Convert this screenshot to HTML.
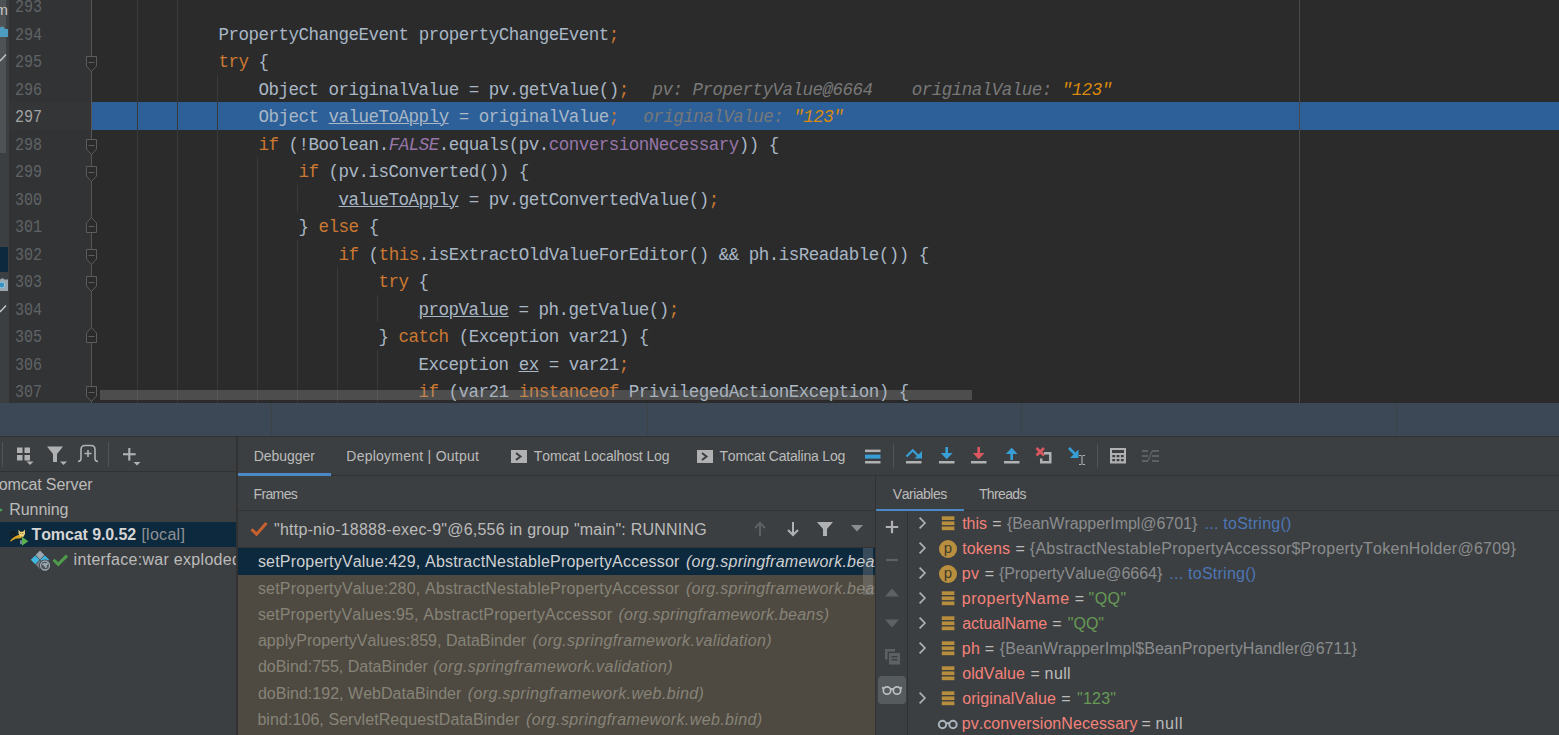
<!DOCTYPE html>
<html>
<head>
<meta charset="utf-8">
<title>IDE</title>
<style>
*{box-sizing:border-box;margin:0;padding:0}
html,body{width:1559px;height:735px;overflow:hidden;background:#3c3f41}
body{position:relative;font-family:"Liberation Sans",sans-serif;color:#bbbbbb}
.abs{position:absolute}
/* ---------- editor ---------- */
#editor{position:absolute;left:0;top:0;width:1559px;height:403px;background:#2b2b2b;overflow:hidden}
#strip{position:absolute;left:0;top:0;width:9px;height:403px;background:#3c3f41}
#gutter{position:absolute;left:9px;top:0;width:82px;height:403px;background:#313335}
#foldline{position:absolute;left:91px;top:0;width:1px;height:403px;background:#555555}
.guide{position:absolute;width:1px;background:#3a3a3a}
#margin{position:absolute;left:1299px;top:0;width:1px;height:403px;background:#4a4a4a}
.row{position:absolute;left:0;width:1559px;height:27.5px}
.num{position:absolute;left:14.8px;top:0;height:27.5px;line-height:27.5px;font-family:"Liberation Mono",monospace;font-size:18px;color:#606366;transform:scaleX(0.835);transform-origin:0 0}
.num span{position:relative;top:2.5px}
.code span.t{position:relative;top:3.4px}
.code{position:absolute;left:98px;top:0;height:27.5px;line-height:27.5px;white-space:pre;font-family:"Liberation Mono",monospace;font-size:17.5px;letter-spacing:-0.5px;color:#a9b7c6}
.k{color:#cc7832}
.p{color:#9876aa}
.pi{color:#9876aa;font-style:italic}
.u{text-decoration:underline;text-decoration-thickness:1px;text-underline-offset:1.2px}
.h{color:#787878;font-style:italic}
.hv{color:#d98a0e;font-style:italic}
.fold{position:absolute;left:85px;width:13px;height:17px}
#hscroll{position:absolute;left:100px;top:390px;width:872px;height:10px;background:rgba(166,166,166,0.28)}
/* ---------- blue bar ---------- */
#bluebar{position:absolute;left:0;top:403px;width:1559px;height:33px;background:#3c4856}
#bluebar i{position:absolute;top:0;width:1px;height:33px;background:#3d4246}
/* ---------- tool window ---------- */
#tw{position:absolute;left:0;top:436px;width:1559px;height:299px;background:#3c3f41;overflow:hidden}
.txt{position:absolute;white-space:pre;line-height:20px;height:20px;font-kerning:none}
.s14{font-size:14px}
.txt b{font-weight:bold}
.txt i{font-style:italic}
.s16{font-size:16px}
</style>
</head>
<body>
<div id="editor">
<div id="strip"><div class="abs" style="left:0;top:0;width:6px;height:153px;background:#4e5254"></div>
<div class="abs" style="left:-4.5px;top:1px;font-size:15px;line-height:18px;color:#c4c4c4">m</div>
<svg class="abs" style="left:0;top:24px" width="9" height="14" viewBox="0 0 9 14"><path d="M0 3.500c1.500-1.500 3-1.500 4 0l1 1.500h3v8h-8z" fill="#4c9dc0"/></svg>
<svg class="abs" style="left:0;top:52px" width="7" height="10" viewBox="0 0 7 10"><path d="M-1 7l1.500 1.500L6 2.500" fill="none" stroke="#c4c4c4" stroke-width="1.500"/></svg>
<div class="abs" style="left:0;top:247px;width:7.500px;height:25px;background:#0d293e"></div>
<svg class="abs" style="left:0;top:276px" width="9" height="16" viewBox="0 0 9 16"><path d="M0 3.500l2.500-1.500l2 1.500h3.500v11.500h-8z" fill="#9aa7b0"/><circle cx="1.800" cy="9" r="2.900" fill="#3592c4" stroke="#b9e0f5" stroke-width=".6"/></svg>
<svg class="abs" style="left:0;top:303px" width="7" height="10" viewBox="0 0 7 10"><path d="M-1 7l1.500 1.500L6 2.500" fill="none" stroke="#c4c4c4" stroke-width="1.500"/></svg>
</div>
<div id="gutter"></div>
<div class="row" style="top:-9px;"><div class="num" style="color:#606366"><span>293</span></div></div>
<div class="row" style="top:19px;"><div class="num" style="color:#606366"><span>294</span></div><div class="code" style="left:218.6px"><span class="t">PropertyChangeEvent propertyChangeEvent<span class="k">;</span></span></div></div>
<div class="row" style="top:46px;"><div class="num" style="color:#606366"><span>295</span></div><div class="code" style="left:218.6px"><span class="t"><span class="k">try</span> {</span></div></div>
<div class="row" style="top:74px;"><div class="num" style="color:#606366"><span>296</span></div><div class="code" style="left:258.6px"><span class="t">Object originalValue = pv.getValue()<span class="k">;</span></span><span class="t h" style="margin-left:23.8px">pv: PropertyValue@6664</span><span class="t h" style="margin-left:39.2px">originalValue: </span><span class="t hv">"123"</span></div></div>
<div class="row" style="top:101px;"><div class="abs" style="left:92px;top:1px;width:1467px;height:28px;background:#2d6099"></div><div class="abs" style="left:9px;top:1px;width:82px;height:28px;background:#333537"></div><div class="num" style="color:#a4a3a3"><span>297</span></div><div class="code" style="left:258.6px"><span class="t">Object <span class="u">valueToApply</span> = originalValue<span class="k">;</span></span><span class="t h" style="margin-left:24.6px">originalValue: </span><span class="t hv">"123"</span></div></div>
<div class="row" style="top:129px;"><div class="num" style="color:#606366"><span>298</span></div><div class="code" style="left:258.6px"><span class="t"><span class="k">if</span> (!Boolean.<span class="pi">FALSE</span>.equals(pv.<span class="p">conversionNecessary</span>)) {</span></div></div>
<div class="row" style="top:156px;"><div class="num" style="color:#606366"><span>299</span></div><div class="code" style="left:298.6px"><span class="t"><span class="k">if</span> (pv.isConverted()) {</span></div></div>
<div class="row" style="top:184px;"><div class="num" style="color:#606366"><span>300</span></div><div class="code" style="left:338.6px"><span class="t"><span class="u">valueToApply</span> = pv.getConvertedValue()<span class="k">;</span></span></div></div>
<div class="row" style="top:211px;"><div class="num" style="color:#606366"><span>301</span></div><div class="code" style="left:298.6px"><span class="t">} <span class="k">else</span> {</span></div></div>
<div class="row" style="top:239px;"><div class="num" style="color:#606366"><span>302</span></div><div class="code" style="left:338.6px"><span class="t"><span class="k">if</span> (<span class="k">this</span>.isExtractOldValueForEditor() &amp;&amp; ph.isReadable()) {</span></div></div>
<div class="row" style="top:266px;"><div class="num" style="color:#606366"><span>303</span></div><div class="code" style="left:378.6px"><span class="t"><span class="k">try</span> {</span></div></div>
<div class="row" style="top:294px;"><div class="num" style="color:#606366"><span>304</span></div><div class="code" style="left:418.6px"><span class="t"><span class="u">propValue</span> = ph.getValue()<span class="k">;</span></span></div></div>
<div class="row" style="top:321px;"><div class="num" style="color:#606366"><span>305</span></div><div class="code" style="left:378.6px"><span class="t">} <span class="k">catch</span> (Exception var21) {</span></div></div>
<div class="row" style="top:349px;"><div class="num" style="color:#606366"><span>306</span></div><div class="code" style="left:418.6px"><span class="t">Exception <span class="u">ex</span> = var21<span class="k">;</span></span></div></div>
<div class="row" style="top:376px;"><div class="num" style="color:#606366"><span>307</span></div><div class="code" style="left:418.6px"><span class="t"><span class="k">if</span> (var21 <span class="k">instanceof</span> PrivilegedActionException) {</span></div></div>
<div class="guide" style="left:137px;top:0px;height:403px"></div>
<div class="guide" style="left:177px;top:0px;height:403px"></div>
<div class="guide" style="left:217px;top:74.5px;height:328.5px"></div>
<div class="guide" style="left:257px;top:157.0px;height:246.0px"></div>
<div class="guide" style="left:297px;top:184.5px;height:27.5px"></div>
<div class="guide" style="left:297px;top:239.5px;height:163.5px"></div>
<div class="guide" style="left:337px;top:267.0px;height:136.0px"></div>
<div class="guide" style="left:377px;top:294.5px;height:27.5px"></div>
<div class="guide" style="left:377px;top:349.5px;height:53.5px"></div>

<div id="margin"></div>
<div id="foldline"></div>
<svg class="fold" style="top:56.0px" viewBox="0 0 13 17"><path d="M1.5 0.5H11.5V10L6.5 15.5L1.5 10Z" fill="#2b2b2b" stroke="#5c5c5c" stroke-width="1"/><path d="M3.5 6.5H9.5" stroke="#5c5c5c" stroke-width="1"/></svg>
<svg class="fold" style="top:138.5px" viewBox="0 0 13 17"><path d="M1.5 0.5H11.5V10L6.5 15.5L1.5 10Z" fill="#2b2b2b" stroke="#5c5c5c" stroke-width="1"/><path d="M3.5 6.5H9.5" stroke="#5c5c5c" stroke-width="1"/></svg>
<svg class="fold" style="top:166.0px" viewBox="0 0 13 17"><path d="M1.5 0.5H11.5V10L6.5 15.5L1.5 10Z" fill="#2b2b2b" stroke="#5c5c5c" stroke-width="1"/><path d="M3.5 6.5H9.5" stroke="#5c5c5c" stroke-width="1"/></svg>
<svg class="fold" style="top:217.0px" viewBox="0 0 13 17"><path d="M1.5 15.5H11.5V6L6.5 0.5L1.5 6Z" fill="#2b2b2b" stroke="#5c5c5c" stroke-width="1"/><path d="M3.5 9.5H9.5" stroke="#5c5c5c" stroke-width="1"/></svg>
<svg class="fold" style="top:248.5px" viewBox="0 0 13 17"><path d="M1.5 0.5H11.5V10L6.5 15.5L1.5 10Z" fill="#2b2b2b" stroke="#5c5c5c" stroke-width="1"/><path d="M3.5 6.5H9.5" stroke="#5c5c5c" stroke-width="1"/></svg>
<svg class="fold" style="top:276.0px" viewBox="0 0 13 17"><path d="M1.5 0.5H11.5V10L6.5 15.5L1.5 10Z" fill="#2b2b2b" stroke="#5c5c5c" stroke-width="1"/><path d="M3.5 6.5H9.5" stroke="#5c5c5c" stroke-width="1"/></svg>
<svg class="fold" style="top:327.0px" viewBox="0 0 13 17"><path d="M1.5 15.5H11.5V6L6.5 0.5L1.5 6Z" fill="#2b2b2b" stroke="#5c5c5c" stroke-width="1"/><path d="M3.5 9.5H9.5" stroke="#5c5c5c" stroke-width="1"/></svg>
<svg class="fold" style="top:386.0px" viewBox="0 0 13 17"><path d="M1.5 0.5H11.5V10L6.5 15.5L1.5 10Z" fill="#2b2b2b" stroke="#5c5c5c" stroke-width="1"/><path d="M3.5 6.5H9.5" stroke="#5c5c5c" stroke-width="1"/></svg>
<div id="hscroll"></div>
</div>
<div id="bluebar"><i style="left:271px"></i><i style="left:647px"></i><i style="left:1021px"></i><i style="left:1396px"></i></div>
<div id="tw">
<div class="abs" style="left:0px;top:0px;width:1559px;height:1px;background:#323232;"></div>
<div class="abs" style="left:0px;top:35px;width:236px;height:1px;background:#323232;"></div>
<div class="abs" style="left:2px;top:6px;width:1px;height:25px;background:#515456;"></div>
<div class="abs" style="left:108px;top:6px;width:1px;height:25px;background:#515456;"></div>
<svg class="abs" style="left:16px;top:10px" width="18" height="20" viewBox="0 0 18 20"><g fill="#afb1b3"><rect x="1" y="1.5" width="5.5" height="5.5"/><rect x="8.5" y="1.5" width="5.5" height="5.5"/><rect x="1" y="9" width="5.5" height="5.5"/><rect x="8.5" y="9" width="5.5" height="5.5"/><path d="M10.5 15.5h7l-3.5 3.5z"/></g></svg>
<svg class="abs" style="left:46px;top:9px" width="22" height="21" viewBox="0 0 22 21"><g fill="#afb1b3"><path d="M1 1.5h16l-6 7.5v8h-4v-8z"/><path d="M14 16.5h7l-3.5 3.5z"/></g></svg>
<svg class="abs" style="left:77px;top:8px" width="22" height="20" viewBox="0 0 22 20"><g fill="none" stroke="#afb1b3" stroke-width="1.6"><path d="M1 17.5c2.5 0 3-1.5 3-3.500v-8.500c0-2.500 1.500-4 4-4h6c2.500 0 4 1.500 4 4v8.500c0 2 .5 3.500 3 3.500"/><path d="M7.500 9.500h7M11 6v7"/></g></svg>
<svg class="abs" style="left:121px;top:10px" width="22" height="21" viewBox="0 0 22 21"><g fill="#afb1b3"><rect x="2" y="7.200" width="12.600" height="2.100"/><rect x="7.250" y="2" width="2.100" height="12.600"/><path d="M12.500 16h7l-3.500 3.500z"/></g></svg>
<div class="abs" style="left:0px;top:86px;width:236px;height:25px;background:#0d293e;"></div>
<div class="txt s16" style="left:-10.8px;top:38.5px;letter-spacing:-0.15px;">Tomcat</div>
<div class="txt s16" style="left:45.8px;top:38.5px;letter-spacing:-0.05px;">Server</div>
<svg class="abs" style="left:0px;top:69px" width="4" height="10" viewBox="0 0 4 10"><path d="M-6 0l9 5l-9 5z" fill="#499c54"/></svg>
<div class="txt s16" style="left:9.2px;top:63.5px;letter-spacing:-0.05px;">Running</div>
<div class="txt s16" style="left:31.5px;top:88.5px;color:#d5d5d5;letter-spacing:-0.102px;"><b>Tomcat 9.0.52</b></div>
<div class="txt s16" style="left:141.4px;top:88.5px;color:#8f9294;letter-spacing:0.275px;">[local]</div>
<div class="txt s16" style="left:73.6px;top:113.5px;letter-spacing:0.3px;width:162.4px;overflow:hidden;">interface:war exploded</div>
<svg class="abs" style="left:9px;top:90px" width="22" height="21" viewBox="0 0 22 21"><circle cx="4.200" cy="8.300" r="2.400" fill="none" stroke="#15181b" stroke-width="1.100"/><path d="M12.500 8.500C8.500 8.800 4 10.800 1 15l1 .6c3-2.600 6-3.400 10.500-3.200z" fill="#d9a41f"/><path d="M7 12.500l1.500 2 1-.5" fill="none" stroke="#15181b" stroke-width=".9"/><path d="M9.400 3.600l1.700 2.200h2.900l1.800-2.200.3 4.200-1.600 2.900h-3l-1.800-2.700z" fill="#f1d47c"/><circle cx="11.700" cy="7.600" r=".55" fill="#6b5a2a"/><circle cx="13.900" cy="7.600" r=".55" fill="#6b5a2a"/><rect x="11" y="14.200" width="2.200" height="4" fill="#6f8194"/><path d="M13 10.800l6.300 4.400-6.300 4.600z" fill="#5bb04e"/></svg>
<svg class="abs" style="left:30px;top:114px" width="22" height="22" viewBox="0 0 22 22"><path d="M10 .6l4.400 4.400-4.400 4.400-4.400-4.400z" fill="#9aa7b0"/><path d="M5.200 5.400l4.400 4.400-4.400 4.400-4.400-4.400z" fill="#40b6e0"/><path d="M14.800 5.400l4.400 4.400-4.400 4.400-4.400-4.400z" fill="#40b6e0"/><path d="M10 10.200l4.400 4.400-4.400 4.400-4.400-4.400z" fill="#9aa7b0" opacity=".6"/><circle cx="15" cy="15.500" r="5.900" fill="#3c3f41"/><circle cx="15" cy="15.500" r="4.500" fill="#4d5459" stroke="#9aa7b0" stroke-width="1.300"/><path d="M12 15c.6-1.800 2.400-2.400 3.600-1.600l1.800-1.400.8 2.400-1.600 1 .4 2.200-1.800.4-1-2.200z" fill="#9aa7b0"/></svg>
<svg class="abs" style="left:52px;top:115px" width="18" height="18" viewBox="0 0 18 18"><path d="M1.600 8.800l4.600 4.600L15 4.600" fill="none" stroke="#4f9c4a" stroke-width="3"/></svg>
<div class="abs" style="left:236px;top:1px;width:2px;height:299px;background:#323232;"></div>
<div class="abs" style="left:238px;top:39px;width:1321px;height:1px;background:#323232;"></div>
<div class="abs" style="left:238px;top:37px;width:93px;height:3px;background:#4a88c7;"></div>
<div class="txt s14" style="left:253.7px;top:10px;letter-spacing:-0.047px;">Debugger</div>
<div class="txt s14" style="left:346.3px;top:10px;letter-spacing:0.247px;">Deployment | Output</div>
<svg class="abs" style="left:511px;top:14px" width="16" height="13" viewBox="0 0 16 13"><rect x="0" y="0" width="16" height="13" fill="#afb1b3"/><path d="M5 3l4.500 3.500L5 10" fill="none" stroke="#3c3f41" stroke-width="2"/></svg>
<div class="txt s14" style="left:533.8px;top:10px;letter-spacing:-0.103px;">Tomcat Localhost Log</div>
<svg class="abs" style="left:697px;top:14px" width="16" height="13" viewBox="0 0 16 13"><rect x="0" y="0" width="16" height="13" fill="#afb1b3"/><path d="M5 3l4.500 3.500L5 10" fill="none" stroke="#3c3f41" stroke-width="2"/></svg>
<div class="txt s14" style="left:719.5px;top:10px;letter-spacing:-0.188px;">Tomcat Catalina Log</div>
<svg class="abs" style="left:865px;top:13px" width="16" height="15" viewBox="0 0 16 15"><rect x="0" y=".6" width="15.5" height="2.500" fill="#afb1b3"/><rect x="0" y="5.600" width="15.500" height="4" fill="#389fd6"/><rect x="0" y="12" width="15.500" height="2.500" fill="#afb1b3"/></svg>
<div class="abs" style="left:893px;top:8px;width:1px;height:24px;background:#515456;"></div>
<svg class="abs" style="left:905px;top:10px" width="18" height="18" viewBox="0 0 18 18"><path d="M1.500 10.500l6.200-6.200 5.500 5.500" fill="none" stroke="#389fd6" stroke-width="2.200"/><path d="M17 5v7.500h-7.500z" fill="#389fd6"/><rect x="1" y="15" width="15.500" height="2.500" fill="#afb1b3"/></svg>
<svg class="abs" style="left:938px;top:10px" width="18" height="18" viewBox="0 0 18 18"><rect x="7.400" y="1" width="2.600" height="8" fill="#389fd6"/><path d="M2.800 7h11.800l-5.900 6.200z" fill="#389fd6"/><rect x="1" y="15" width="15.500" height="2.500" fill="#afb1b3"/></svg>
<svg class="abs" style="left:970px;top:10px" width="18" height="18" viewBox="0 0 18 18"><rect x="7.400" y="1" width="2.600" height="8" fill="#db5860"/><path d="M2.800 7h11.800l-5.900 6.200z" fill="#db5860"/><rect x="1" y="15" width="15.500" height="2.500" fill="#afb1b3"/></svg>
<svg class="abs" style="left:1003px;top:10px" width="18" height="18" viewBox="0 0 18 18"><rect x="7.400" y="6" width="2.600" height="8" fill="#389fd6"/><path d="M2.800 8h11.800l-5.900-6.200z" fill="#389fd6"/><rect x="1" y="15" width="15.500" height="2.500" fill="#afb1b3"/></svg>
<svg class="abs" style="left:1035px;top:10px" width="18" height="19" viewBox="0 0 18 19"><path d="M1.500 2l7.500 7.500M9 2l-7.500 7.500" stroke="#db5860" stroke-width="2.600" fill="none"/><path d="M9 6h7.500v11.500h-11.500v-5h2.500v2.500h6.500v-6.500h-5z" fill="#afb1b3"/></svg>
<svg class="abs" style="left:1067px;top:10px" width="20" height="20" viewBox="0 0 20 20"><path d="M2 2l8 8" stroke="#389fd6" stroke-width="2.600"/><path d="M11.500 3.500v8.500h-8.500z" fill="#389fd6"/><path d="M12 9.500h2.500M15.500 9.500h2.500M12 18.500h2.500M15.500 18.500h2.500M15 10v8" stroke="#afb1b3" stroke-width="1.100" fill="none"/></svg>
<div class="abs" style="left:1097px;top:8px;width:1px;height:24px;background:#515456;"></div>
<svg class="abs" style="left:1110px;top:12px" width="16" height="16" viewBox="0 0 16 16"><path d="M0 0h16v15.500h-16z M2 2v3h12v-3z M2.300 7v2.300h2.800v-2.300z M6.600 7v2.300h2.800v-2.300z M10.900 7v2.300h2.800v-2.300z M2.300 11v2.300h2.800v-2.300z M6.600 11v2.300h2.800v-2.300z M10.900 11v2.300h2.800v-2.300z" fill="#afb1b3" fill-rule="evenodd"/></svg>
<svg class="abs" style="left:1142px;top:13px" width="18" height="14" viewBox="0 0 18 14"><g stroke="#5e6163" stroke-width="1.800" fill="none"><path d="M0 2h6M0 7h6M0 12h6M10 2h7M10 7h7M10 12h7"/><path d="M5 12c3 0 3-10 6-10" stroke-width="1.300"/></g></svg>
<div class="txt s14" style="left:253.5px;top:48px;letter-spacing:-0.63px;">Frames</div>
<div class="abs" style="left:238px;top:74px;width:637px;height:1px;background:#323232;"></div>
<div class="abs" style="left:238px;top:111px;width:637px;height:1px;background:#323232;"></div>
<svg class="abs" style="left:250px;top:85px" width="18" height="15" viewBox="0 0 18 15"><path d="M1.500 8.200l5 5L16.500 2" fill="none" stroke="#c8612f" stroke-width="3"/></svg>
<div class="txt s16" style="left:274.0px;top:83.5px;letter-spacing:0.231px;">"http-nio-18888-exec-9"@6,556 in group "main": RUNNING</div>
<svg class="abs" style="left:753px;top:85px" width="14" height="16" viewBox="0 0 14 16"><path d="M7 15V2M2 7l5-5 5 5" fill="none" stroke="#5e6163" stroke-width="2"/></svg>
<svg class="abs" style="left:786px;top:85px" width="14" height="16" viewBox="0 0 14 16"><path d="M7 1v13M2 9l5 5 5-5" fill="none" stroke="#afb1b3" stroke-width="2"/></svg>
<svg class="abs" style="left:816px;top:85px" width="18" height="16" viewBox="0 0 18 16"><path d="M1 1h16l-6 7v7h-4v-7z" fill="#afb1b3"/></svg>
<svg class="abs" style="left:851px;top:89px" width="12" height="7" viewBox="0 0 12 7"><path d="M0 0h12l-6 6.500z" fill="#8b8e90"/></svg>
<div class="abs" style="left:238px;top:112px;width:637px;height:27px;background:#0d293e;"></div>
<div class="abs" style="left:238px;top:139px;width:637px;height:160px;background:#4e4a41;"></div>
<div class="txt s16" style="left:257.9px;top:115.79999999999995px;color:#d0d0d0;letter-spacing:0.199px;">setPropertyValue:429, AbstractNestablePropertyAccessor</div>
<div class="txt s16" style="left:686.0px;top:115.79999999999995px;color:#d0d0d0;letter-spacing:0.262px;width:189.0px;overflow:hidden;"><i>(org.springframework.beans)</i></div>
<div class="txt s16" style="left:257.9px;top:142.60000000000002px;color:#878378;letter-spacing:0.199px;">setPropertyValue:280, AbstractNestablePropertyAccessor</div>
<div class="txt s16" style="left:686.0px;top:142.60000000000002px;color:#878378;letter-spacing:0.262px;width:189.0px;overflow:hidden;"><i>(org.springframework.beans)</i></div>
<div class="txt s16" style="left:257.9px;top:169.0px;color:#878378;letter-spacing:0.162px;">setPropertyValues:95, AbstractPropertyAccessor</div>
<div class="txt s16" style="left:618.5px;top:169.0px;color:#878378;letter-spacing:0.231px;width:256.5px;overflow:hidden;"><i>(org.springframework.beans)</i></div>
<div class="txt s16" style="left:257.9px;top:195.20000000000005px;color:#878378;letter-spacing:0.015px;">applyPropertyValues:859, DataBinder</div>
<div class="txt s16" style="left:532.5px;top:195.20000000000005px;color:#878378;letter-spacing:0.339px;width:342.5px;overflow:hidden;"><i>(org.springframework.validation)</i></div>
<div class="txt s16" style="left:257.9px;top:221.39999999999998px;color:#878378;letter-spacing:-0.003px;">doBind:755, DataBinder</div>
<div class="txt s16" style="left:433.2px;top:221.39999999999998px;color:#878378;letter-spacing:0.348px;width:441.8px;overflow:hidden;"><i>(org.springframework.validation)</i></div>
<div class="txt s16" style="left:257.9px;top:247.79999999999995px;color:#878378;letter-spacing:0.026px;">doBind:192, WebDataBinder</div>
<div class="txt s16" style="left:467.8px;top:247.79999999999995px;color:#878378;letter-spacing:0.381px;width:407.2px;overflow:hidden;"><i>(org.springframework.web.bind)</i></div>
<div class="txt s16" style="left:257.4px;top:273.6px;color:#878378;letter-spacing:0.073px;">bind:106, ServletRequestDataBinder</div>
<div class="txt s16" style="left:526.1px;top:273.6px;color:#878378;letter-spacing:0.381px;width:348.9px;overflow:hidden;"><i>(org.springframework.web.bind)</i></div>
<div class="abs" style="left:863px;top:112px;width:10px;height:47px;background:rgba(166,166,166,0.28);"></div>
<div class="abs" style="left:875px;top:40px;width:1px;height:260px;background:#323232;"></div>
<div class="abs" style="left:876px;top:74px;width:683px;height:1px;background:#323232;"></div>
<div class="abs" style="left:876px;top:72.5px;width:88px;height:2.5px;background:#4a88c7;"></div>
<div class="txt s14" style="left:892.8px;top:48px;letter-spacing:-0.483px;">Variables</div>
<div class="txt s14" style="left:978.9px;top:48px;letter-spacing:-0.626px;">Threads</div>
<div class="abs" style="left:907px;top:75px;width:1px;height:224px;background:#323232;"></div>
<svg class="abs" style="left:884px;top:83px" width="16" height="16" viewBox="0 0 16 16"><path d="M8 1.800v12.400M1.800 8h12.400" stroke="#afb1b3" stroke-width="2.200"/></svg>
<svg class="abs" style="left:884px;top:117px" width="16" height="14" viewBox="0 0 16 14"><path d="M2 7h12" stroke="#5e6163" stroke-width="2.200"/></svg>
<svg class="abs" style="left:884px;top:151px" width="16" height="10" viewBox="0 0 16 10"><path d="M1 9.500h14l-7-8z" fill="#5e6163"/></svg>
<svg class="abs" style="left:884px;top:183px" width="16" height="10" viewBox="0 0 16 10"><path d="M1 .5h14l-7 8z" fill="#5e6163"/></svg>
<svg class="abs" style="left:884px;top:212px" width="17" height="17" viewBox="0 0 17 17"><path d="M1 1h10v2.500h-7.500v8h-2.500z" fill="#5e6163"/><path d="M5 5h11v11.500h-11z M7.500 8v1.500h6v-1.500z M7.500 11v1.500h6v-1.500z" fill="#5e6163" fill-rule="evenodd"/></svg>
<div class="abs" style="left:878px;top:240px;width:28px;height:28px;background:#565b5e;border-radius:4px"></div>
<svg class="abs" style="left:882px;top:248px" width="20" height="12" viewBox="0 0 20 12"><g fill="none" stroke="#bcbfc1" stroke-width="1.700"><circle cx="5" cy="6.500" r="3.700"/><circle cx="15" cy="6.500" r="3.700"/><path d="M8.500 5.500c1-.8 2-.8 3 0M1.500 5l-1-2M18.500 5l1-2"/></g></svg>
<svg class="abs" style="left:916px;top:79.0px" width="12" height="16" viewBox="0 0 12 16"><path d="M3.600 2.600l5.300 5.400-5.300 5.400" fill="none" stroke="#afb1b3" stroke-width="1.700"/></svg>
<svg class="abs" style="left:941px;top:80.0px" width="14" height="16" viewBox="0 0 14 16"><g fill="#b68e3e"><rect x="0.800" y="0.300" width="12.600" height="3.700"/><rect x="0.800" y="5.400" width="12.600" height="3.700"/><rect x="0.800" y="10.500" width="12.600" height="3.700"/></g></svg>
<div class="txt s16" style="left:962.2px;top:77.60000000000002px;color:#f3827a;letter-spacing:-0.033px;">this</div>
<div class="txt s16" style="left:992.25px;top:77.60000000000002px;letter-spacing:0px;">=</div>
<div class="txt s16" style="left:1006.9px;top:77.60000000000002px;color:#8a8c8e;letter-spacing:-0.054px;">{BeanWrapperImpl@6701}</div>
<div class="txt s16" style="left:1204.5px;top:77.60000000000002px;color:#4d76b5;letter-spacing:0.25px;">... toString()</div>
<svg class="abs" style="left:916px;top:104.0px" width="12" height="16" viewBox="0 0 12 16"><path d="M3.600 2.600l5.300 5.400-5.300 5.400" fill="none" stroke="#afb1b3" stroke-width="1.700"/></svg>
<div class="abs" style="left:939px;top:104.0px;width:18px;height:18px;border-radius:9px;background:#b98f3f;color:#3f3a2e;font-size:15px;line-height:16px;text-align:center">p</div>
<div class="txt s16" style="left:962.2px;top:102.60000000000002px;color:#f3827a;letter-spacing:0.112px;">tokens</div>
<div class="txt s16" style="left:1015.55px;top:102.60000000000002px;letter-spacing:0px;">=</div>
<div class="txt s16" style="left:1029.8px;top:102.60000000000002px;color:#8a8c8e;letter-spacing:0.249px;">{AbstractNestablePropertyAccessor$PropertyTokenHolder@6709}</div>
<svg class="abs" style="left:916px;top:129.0px" width="12" height="16" viewBox="0 0 12 16"><path d="M3.600 2.600l5.300 5.400-5.300 5.400" fill="none" stroke="#afb1b3" stroke-width="1.700"/></svg>
<div class="abs" style="left:939px;top:129.0px;width:18px;height:18px;border-radius:9px;background:#b98f3f;color:#3f3a2e;font-size:15px;line-height:16px;text-align:center">p</div>
<div class="txt s16" style="left:961.7px;top:127.60000000000002px;color:#f3827a;letter-spacing:0.5px;">pv</div>
<div class="txt s16" style="left:984.8px;top:127.60000000000002px;letter-spacing:0px;">=</div>
<div class="txt s16" style="left:998.9px;top:127.60000000000002px;color:#8a8c8e;letter-spacing:-0.025px;">{PropertyValue@6664}</div>
<div class="txt s16" style="left:1169.3px;top:127.60000000000002px;color:#4d76b5;letter-spacing:0.25px;">... toString()</div>
<svg class="abs" style="left:916px;top:154.0px" width="12" height="16" viewBox="0 0 12 16"><path d="M3.600 2.600l5.300 5.400-5.300 5.400" fill="none" stroke="#afb1b3" stroke-width="1.700"/></svg>
<svg class="abs" style="left:941px;top:155.0px" width="14" height="16" viewBox="0 0 14 16"><g fill="#b68e3e"><rect x="0.800" y="0.300" width="12.600" height="3.700"/><rect x="0.800" y="5.400" width="12.600" height="3.700"/><rect x="0.800" y="10.500" width="12.600" height="3.700"/></g></svg>
<div class="txt s16" style="left:961.7px;top:152.60000000000002px;color:#f3827a;letter-spacing:0.548px;">propertyName</div>
<div class="txt s16" style="left:1074.85px;top:152.60000000000002px;letter-spacing:0px;">=</div>
<div class="txt s16" style="left:1088.6px;top:152.60000000000002px;color:#679a56;letter-spacing:0.41px;">"QQ"</div>
<svg class="abs" style="left:916px;top:179.0px" width="12" height="16" viewBox="0 0 12 16"><path d="M3.600 2.600l5.300 5.400-5.300 5.400" fill="none" stroke="#afb1b3" stroke-width="1.700"/></svg>
<svg class="abs" style="left:941px;top:180.0px" width="14" height="16" viewBox="0 0 14 16"><g fill="#b68e3e"><rect x="0.800" y="0.300" width="12.600" height="3.700"/><rect x="0.800" y="5.400" width="12.600" height="3.700"/><rect x="0.800" y="10.500" width="12.600" height="3.700"/></g></svg>
<div class="txt s16" style="left:962.2px;top:177.60000000000002px;color:#f3827a;letter-spacing:-0.042px;">actualName</div>
<div class="txt s16" style="left:1052.15px;top:177.60000000000002px;letter-spacing:0px;">=</div>
<div class="txt s16" style="left:1067.8px;top:177.60000000000002px;color:#679a56;letter-spacing:-0.023px;">"QQ"</div>
<svg class="abs" style="left:916px;top:204.0px" width="12" height="16" viewBox="0 0 12 16"><path d="M3.600 2.600l5.300 5.400-5.300 5.400" fill="none" stroke="#afb1b3" stroke-width="1.700"/></svg>
<svg class="abs" style="left:941px;top:205.0px" width="14" height="16" viewBox="0 0 14 16"><g fill="#b68e3e"><rect x="0.800" y="0.300" width="12.600" height="3.700"/><rect x="0.800" y="5.400" width="12.600" height="3.700"/><rect x="0.800" y="10.500" width="12.600" height="3.700"/></g></svg>
<div class="txt s16" style="left:961.7px;top:202.60000000000002px;color:#f3827a;letter-spacing:0.5px;">ph</div>
<div class="txt s16" style="left:984.8px;top:202.60000000000002px;letter-spacing:0px;">=</div>
<div class="txt s16" style="left:999.8px;top:202.60000000000002px;color:#8a8c8e;letter-spacing:0.069px;">{BeanWrapperImpl$BeanPropertyHandler@6711}</div>
<svg class="abs" style="left:941px;top:230.0px" width="14" height="16" viewBox="0 0 14 16"><g fill="#b68e3e"><rect x="0.800" y="0.300" width="12.600" height="3.700"/><rect x="0.800" y="5.400" width="12.600" height="3.700"/><rect x="0.800" y="10.500" width="12.600" height="3.700"/></g></svg>
<div class="txt s16" style="left:962.2px;top:227.60000000000002px;color:#f3827a;letter-spacing:0.046px;">oldValue</div>
<div class="txt s16" style="left:1030.45px;top:227.60000000000002px;letter-spacing:0px;">=</div>
<div class="txt s16" style="left:1044.6px;top:227.60000000000002px;letter-spacing:0.383px;">null</div>
<svg class="abs" style="left:916px;top:254.0px" width="12" height="16" viewBox="0 0 12 16"><path d="M3.600 2.600l5.300 5.400-5.300 5.400" fill="none" stroke="#afb1b3" stroke-width="1.700"/></svg>
<svg class="abs" style="left:941px;top:255.0px" width="14" height="16" viewBox="0 0 14 16"><g fill="#b68e3e"><rect x="0.800" y="0.300" width="12.600" height="3.700"/><rect x="0.800" y="5.400" width="12.600" height="3.700"/><rect x="0.800" y="10.500" width="12.600" height="3.700"/></g></svg>
<div class="txt s16" style="left:962.2px;top:252.60000000000002px;color:#f3827a;letter-spacing:0.091px;">originalValue</div>
<div class="txt s16" style="left:1061.35px;top:252.60000000000002px;letter-spacing:0px;">=</div>
<div class="txt s16" style="left:1077.0px;top:252.60000000000002px;color:#679a56;letter-spacing:0.231px;">"123"</div>
<svg class="abs" style="left:937px;top:281.6px" width="22" height="12" viewBox="0 0 22 12"><g fill="none" stroke="#a9b4bd" stroke-width="2"><circle cx="5.500" cy="6.500" r="3.700"/><circle cx="16" cy="6.500" r="3.700"/><path d="M9.200 5.700c1-.8 2.200-.8 3.200 0"/></g></svg>
<div class="txt s16" style="left:961.7px;top:277.6px;color:#f3827a;letter-spacing:0.072px;">pv.conversionNecessary</div>
<div class="txt s16" style="left:1141.55px;top:277.6px;letter-spacing:0px;">=</div>
<div class="txt s16" style="left:1155.5px;top:277.6px;letter-spacing:0.683px;">null</div>
</div>
</body>
</html>
